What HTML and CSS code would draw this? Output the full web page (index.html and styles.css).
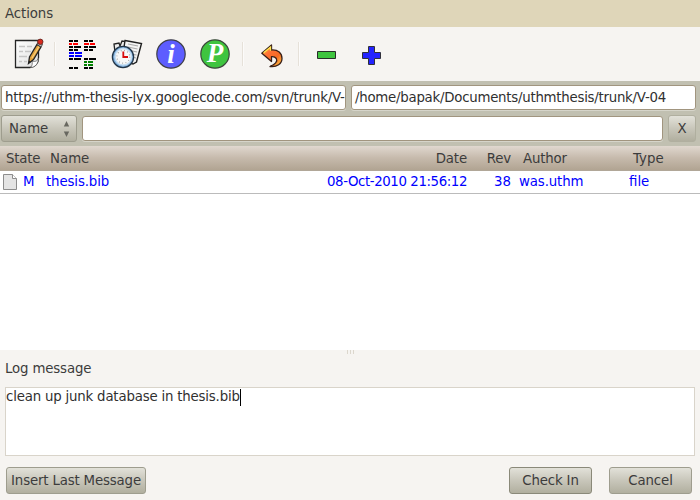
FILE: index.html
```html
<!DOCTYPE html>
<html lang="en">
<head>
<meta charset="utf-8">
<title>Check In</title>
<link rel="stylesheet" href="styles.css">
</head>
<body>
<div class="window">
  <nav class="menubar"><span>Actions</span></nav>
  <div class="toolbar">
    <svg class="icon edit" width="32" height="32" viewBox="0 0 32 32">
      <defs>
        <linearGradient id="paper" x1="0" y1="0" x2="1" y2="1"><stop offset="0" stop-color="#fff"/><stop offset="1" stop-color="#dedede"/></linearGradient>
      </defs>
      <path d="M2.5 2.500H25.500V20C25.500 25 22 29.500 17 29.500H2.500Z" fill="url(#paper)" stroke="#252525" stroke-width="1.300"/>
      <path d="M17.500 29.500C19.500 27.500 19.500 25 19 23C22 24 25 23 25.500 20C25.500 25 22.500 29.500 17.500 29.500Z" fill="#fff" stroke="#555" stroke-width=".7"/>
      <path d="M6 8.500H12M14 8.500H19M6 13.500H10M12 13.500H18M6 18.500H14M6 23.500H9M11 23.500H14" stroke="#c5c5c5" stroke-width="1.500"/>
      <path d="M15.500 25.500L16.500 19L24 6.500L28 9L20.500 21.500Z" fill="#e3a23c" stroke="#222" stroke-width="1.300"/>
      <path d="M19 20L26 8.500" stroke="#f9cf79" stroke-width="1.200"/>
      <path d="M24 6.500L25.500 4L29.500 6.500L28 9Z" fill="#bbb" stroke="#333" stroke-width=".8"/>
      <path d="M15.500 25.500L16 22.500L18 23.700Z" fill="#222"/>
      <circle cx="27.300" cy="3.800" r="2.700" fill="#d8291d" stroke="#57201c" stroke-width=".8"/>
    </svg>
    <span class="sep"></span>
    <svg class="icon diff" width="27" height="30" viewBox="0 0 27 30" shape-rendering="crispEdges">
      <path fill="#000" d="M0 0h4v2H0zM5 0h4v2H5zM15 0h4v2h-4zM20 0h4v2h-4zM0 6h4v2H0zM5 6h7v2H5zM15 6h4v2h-4zM20 6h7v2h-7zM0 9h4v2H0zM5 9h4v2H5zM15 9h4v2h-4zM20 9h4v2h-4zM0 18h4v2H0zM5 18h7v2H5zM15 18h4v2h-4zM20 18h7v2h-7zM0 27h4v2H0zM5 27h4v2H5zM15 27h4v2h-4zM20 27h4v2h-4z"/>
      <path fill="#f00" d="M0 3h3v2H0zM4 3h5v2H4zM15 3h5v2h-5zM21 3h5v2h-5z"/>
      <path fill="#00f" d="M0 12h5v2H0zM6 12h7v2H6zM0 15h5v2H0zM6 15h7v2H6z"/>
      <path fill="#008000" d="M15 21h3v2h-3zM19 21h5v2h-5zM15 24h3v2h-3zM19 24h5v2h-5z"/>
    </svg>
    <svg class="icon log" width="32" height="32" viewBox="0 0 32 32">
      <path d="M4 14L3 6L8 5L9 8L11 3L18 4L16 20Z" fill="#eee" stroke="#222" stroke-width="1.300"/>
      <path d="M14 2.500L30.500 5.500L25.500 24L22 26L11 23Z" fill="#f4f4f4" stroke="#202020" stroke-width="1.400"/>
      <path d="M17 6L27 8M17 9L26.500 11M17 12L26 14M20 16L25.500 17M21 19L25 20" stroke="#aaa" stroke-width="1.100"/>
      <circle cx="12" cy="19" r="10.600" fill="#7daedb" stroke="#223548" stroke-width="1.300"/>
      <circle cx="12.300" cy="18.800" r="8.300" fill="#f7f8f8" stroke="#c5ddf2" stroke-width="1.500"/>
      <circle cx="12.300" cy="18.800" r="6.400" fill="none" stroke="#999" stroke-width="1.200" stroke-dasharray=".8 2.550"/>
      <path d="M12.300 13.500V19H17" fill="none" stroke="#d80d0d" stroke-width="1.800"/>
    </svg>
    <svg class="icon info" width="30" height="30" viewBox="0 0 30 30">
      <circle cx="15" cy="15" r="14.200" fill="#5d5dff" stroke="#3f3f46" stroke-width="1.200"/>
      <text class="glyph" x="15" y="23.500" text-anchor="middle">i</text>
    </svg>
    <svg class="icon prop" width="30" height="30" viewBox="0 0 30 30">
      <circle cx="15" cy="15" r="14.200" fill="#3fc43f" stroke="#3c463c" stroke-width="1.200"/>
      <text class="glyph" x="15" y="23" text-anchor="middle">P</text>
    </svg>
    <span class="sep"></span>
    <svg class="icon undo" width="22" height="24" viewBox="0 0 22 24">
      <defs><linearGradient id="arrow" x1="0" y1="0" x2="1" y2="1"><stop offset="0" stop-color="#ffd34a"/><stop offset=".35" stop-color="#ff7034"/><stop offset=".65" stop-color="#f66b24"/><stop offset="1" stop-color="#ffd54c"/></linearGradient></defs>
      <path d="M.8 9.200L10.500 1V6C17 5.500 21 9 21 14.500C21 19.500 16 23.500 9 22.500C14 20.500 17 17.500 15.300 14.500C14.200 13 12.500 12.500 10.500 12.700V17.500Z" fill="url(#arrow)" stroke="#382018" stroke-width="1.300" stroke-linejoin="round"/>
      <path d="M2.600 8.800L9.500 3.200V6.800" fill="none" stroke="#ffe64f" stroke-width="1.300"/>
    </svg>
    <span class="sep"></span>
    <svg class="icon minus" width="19" height="8" viewBox="0 0 19 8"><path d="M.5.5h18v7H.5z" fill="#3fc43f" stroke="#292d29"/></svg>
    <svg class="icon plus" width="19" height="19" viewBox="0 0 19 19"><path d="M6.500.5h6v6h6v6h-6v6h-6v-6h-6v-6h6z" fill="#2323ff" stroke="#30303a"/></svg>
  </div>
  <div class="paths">
    <div class="field path"><span class="url">https://uthm-thesis-lyx.googlecode.com/svn/trunk/V-</span></div>
    <div class="field path"><span class="local">/home/bapak/Documents/uthmthesis/trunk/V-04</span></div>
  </div>
  <div class="filter">
    <div class="btn combo"><span>Name</span>
      <svg width="7" height="17" viewBox="0 0 7 17"><path d="M3.500 1L6.200 6.500H.8zM3.500 17L.8 11.500h5.400z" fill="#686860"/></svg>
    </div>
    <div class="field search"></div>
    <div class="btn clear">X</div>
  </div>
  <div class="grid head">
    <span class="state">State</span><span class="name">Name</span><span class="date">Date</span><span class="rev">Rev</span><span class="author">Author</span><span class="type">Type</span>
  </div>
  <div class="grid row">
    <span class="state">
      <svg width="14" height="16" viewBox="0 0 14 16"><path d="M.5.500H9.500L13.500 4.500V15.500H.5z" fill="#e4e4e4" stroke="#8d8d8d"/><path d="M9.500.500V4.500H13.500" fill="#fff" stroke="#8d8d8d"/></svg>
      M</span><span class="name">thesis.bib</span><span class="date">08-Oct-2010 21:56:12</span><span class="rev">38</span><span class="author">was.uthm</span><span class="type">file</span>
  </div>
  <div class="blank"></div>
  <div class="bottom">
    <div class="grip"><i></i><i></i><i></i></div>
    <div class="label"><span>Log message</span></div>
    <div class="message"><span>clean up junk database in thesis.bib</span><i class="caret"></i></div>
    <div class="actions">
      <div class="btn insert"><span>Insert Last Message</span></div>
      <div class="btn checkin"><span>Check In</span></div>
      <div class="btn cancel"><span>Cancel</span></div>
    </div>
  </div>
</div>
</body>
</html>
```
FILE: styles.css
```css
* { box-sizing: border-box; }
body { margin: 0; font: 13.33px/16px "DejaVu Sans", sans-serif; color: #3c3c3c; background: #f6f4f1; }
.window { width: 700px; height: 500px; overflow: hidden; display: flex; flex-direction: column; white-space: nowrap; }
.menubar { height: 27px; padding: 6px 5px; background: #dfd6b9; flex: none; letter-spacing: -.1px; }
.toolbar { height: 54px; display: flex; align-items: center; flex: none; padding-left: 13px; background: #f6f4f1; }
.icon { display: block; flex: none; overflow: visible; }
.sep { width: 2px; height: 24px; background: linear-gradient(90deg, #e6e1d9 50%, #fcfbfa 50%); }
.edit { margin-right: 9px; }
.diff { margin: 2px 15px 0 13px; }
.log { margin-right: 13px; }
.info { margin-right: 14px; }
.prop { margin-right: 12px; }
.undo { margin: 3px 15px 0 17px; }
.minus { margin: 2px 26px 0 17px; }
.plus { margin-top: 3px; }
.glyph { font: italic bold 27px "Liberation Serif", serif; fill: #fff; }
.paths { display: flex; gap: 5px; padding: 4px 4px 0 1px; height: 34px; background: #c1c0b1; flex: none; }
.field { background: #fff; border: 1px solid #a1957f; border-radius: 3px; box-shadow: 0 1px 0 #d6d5ca; height: 25px; }
.path { width: 345px; padding: 4px 0 4px 3px; color: #303030; }
.url { letter-spacing: -.22px; }
.local { letter-spacing: -.25px; }
.filter { display: flex; align-items: flex-start; gap: 5px; padding: 0 4px 0 1px; height: 31px; background: #c1c0b1; flex: none; }
.btn { display: flex; align-items: center; justify-content: center; height: 27px; border: 1px solid #9e9d8e; border-radius: 3px; background: linear-gradient(#e2e1d9, #c8c6ba 50%, #b1af9f); }
.combo { width: 76px; justify-content: space-between; padding: 0 6px 0 7px; }
.search { flex: 1; margin-top: 1px; }
.clear { width: 28px; border-color: #b0af9f; }
.grid { display: grid; grid-template-columns: 46px 281px 140px 44px 110px 79px; flex: none; }
.head { height: 25px; padding-top: 5px; background: linear-gradient(#e0d8cf, #c6baac 50%, #b1a492); border-bottom: 1px solid #b1a798; }
.head .state { padding-left: 6px; letter-spacing: -.2px; }
.head .name { padding-left: 4px; }
.date, .rev { text-align: right; }
.head .date, .head .rev { letter-spacing: -.15px; }
.author, .type { padding-left: 8px; }
.head .author, .head .type { padding-left: 12px; }
.head .author { letter-spacing: -.2px; }
.row { height: 23px; padding-top: 3px; color: #00f; background: #fff; border-bottom: 1px solid #bbb; }
.row .state { display: flex; gap: 6px; padding-left: 3px; }
.row .name, .row .author { letter-spacing: -.12px; }
.row .date { letter-spacing: -.4px; }
.blank { height: 156px; background: #fff; flex: none; }
.bottom { flex: 1; padding: 0 5px; background: #f6f4f1; }
.grip { display: flex; gap: 2px; justify-content: center; height: 4px; }
.grip i { width: 1px; background: #dcd7cd; }
.label { height: 33px; padding-top: 7px; letter-spacing: -.15px; }
.message { display: flex; height: 69px; padding-top: 1px; border: 1px solid #d9d4ca; background: #fff; color: #303030; letter-spacing: -.19px; }
.caret { width: 1px; height: 17px; background: #000; }
.actions { display: flex; padding: 11px 3px 0 1px; }
.insert { width: 140px; letter-spacing: -.16px; }
.checkin { width: 83px; margin-left: auto; border-color: #8a8979; letter-spacing: -.16px; }
.cancel { width: 83px; margin-left: 17px; letter-spacing: -.1px; }
```
